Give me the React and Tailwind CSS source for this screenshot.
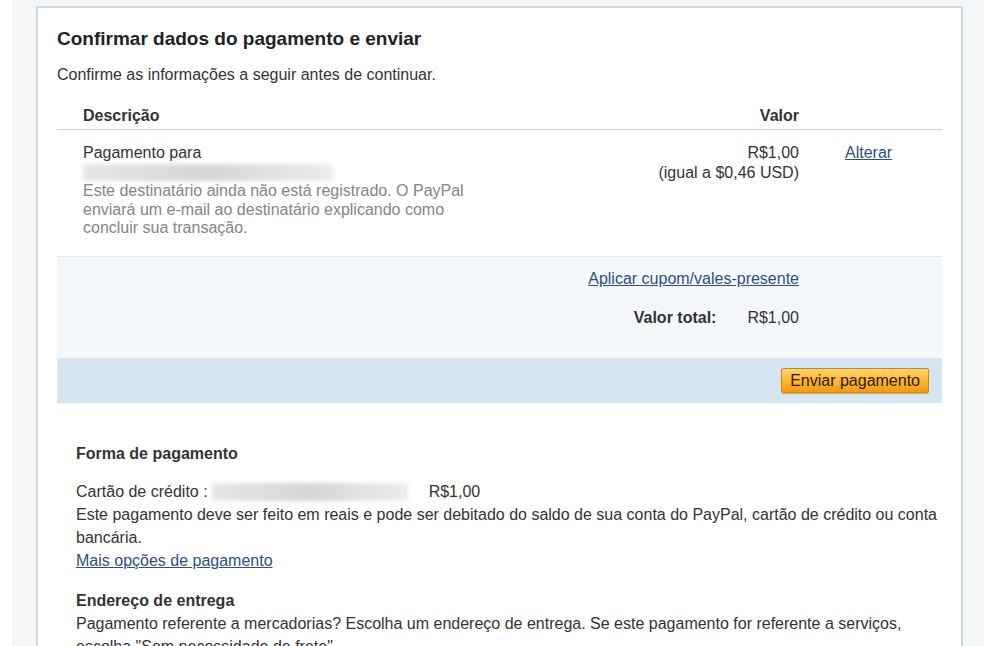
import React from "react";

const Blur = ({ className }) => (
  <div className={`rounded-sm blur-[2px] bg-gradient-to-r from-[#e6e6e6] via-[#d6d6d6] to-[#ededed] ${className}`}></div>
);

const App = () => {
  return (
    <div className="w-[984px] h-[646px] overflow-hidden bg-white pl-3 font-['Liberation_Sans',Arial,sans-serif] text-[#333] text-[16px]">
      <div className="h-full bg-[#f4f5f7] pl-6 pt-1.5 pr-[21px]">
        <div className="h-[700px] bg-white border-2 border-[#cdd7e2] px-[19px] pt-[20px]">
          {/* Header */}
          <h1 className="text-[19px] font-bold leading-[22px] text-[#222]">Confirmar dados do pagamento e enviar</h1>
          <p className="mt-[15px] leading-5">Confirme as informações a seguir antes de continuar.</p>

          {/* Table */}
          <div className="mt-[21px]">
            <div className="flex border-b border-[#c9d3dd] pb-[3px] font-bold leading-5">
              <div className="flex-1 pl-[26px]">Descrição</div>
              <div className="text-right">Valor</div>
              <div className="w-[143px]"></div>
            </div>
            <div className="flex pt-[13px] h-[127px] border-b border-[#e3e8ee]">
              <div className="flex-1 pl-[26px]">
                <div className="leading-5">Pagamento para</div>
                <Blur className="w-[250px] h-[17px] mt-[1px]" />
                <p className="w-[400px] text-[#858585] leading-[18.5px] mt-[1px]">
                  Este destinatário ainda não está registrado. O PayPal enviará um e-mail ao destinatário explicando como concluir sua transação.
                </p>
              </div>
              <div className="text-right leading-5">
                <div>R$1,00</div>
                <div>(igual a $0,46 USD)</div>
              </div>
              <div className="w-[143px] pl-[46px] leading-5">
                <a href="#" className="text-[#2c4f84] underline">Alterar</a>
              </div>
            </div>

            {/* Totals */}
            <div className="bg-[#f4f8fb] h-[101px] pt-[12px] pr-[143px] flex flex-col items-end">
              <a href="#" className="text-[#2c4f84] underline leading-5">Aplicar cupom/vales-presente</a>
              <div className="flex mt-[19px] leading-5">
                <span className="font-bold">Valor total:</span>
                <span className="ml-[31px]">R$1,00</span>
              </div>
            </div>
            <div className="bg-[#d6e5f2] h-[45px] flex items-center justify-end pr-[13px]">
              <button className="h-[25px] px-[8px] text-[16px] text-[#2a1a00] border border-[#d48b06] rounded-[2px] bg-gradient-to-b from-[#ffd26e] via-[#ffb72c] to-[#f59a0c] shadow-[0_1px_1px_rgba(0,0,0,0.25)] leading-5">
                Enviar pagamento
              </button>
            </div>
          </div>

          {/* Payment method */}
          <div className="pl-[19px] mt-[41px]">
            <h2 className="font-bold leading-5">Forma de pagamento</h2>
            <div className="flex items-center mt-[16px] leading-[23px]">
              <span>Cartão de crédito :</span>
              <Blur className="w-[196px] h-[18px] ml-[4px]" />
              <span className="ml-[21px]">R$1,00</span>
            </div>
            <p className="leading-[23px]">
              Este pagamento deve ser feito em reais e pode ser debitado do saldo de sua conta do PayPal, cartão de crédito ou conta bancária.
            </p>
            <a href="#" className="text-[#2c4f84] underline leading-[23px]">Mais opções de pagamento</a>

            <h2 className="font-bold leading-[23px] mt-[16px]">Endereço de entrega</h2>
            <p className="leading-[23px]">
              Pagamento referente a mercadorias? Escolha um endereço de entrega. Se este pagamento for referente a serviços, escolha "Sem necessidade de frete".
            </p>
          </div>
        </div>
      </div>
    </div>
  );
};

export default App;
